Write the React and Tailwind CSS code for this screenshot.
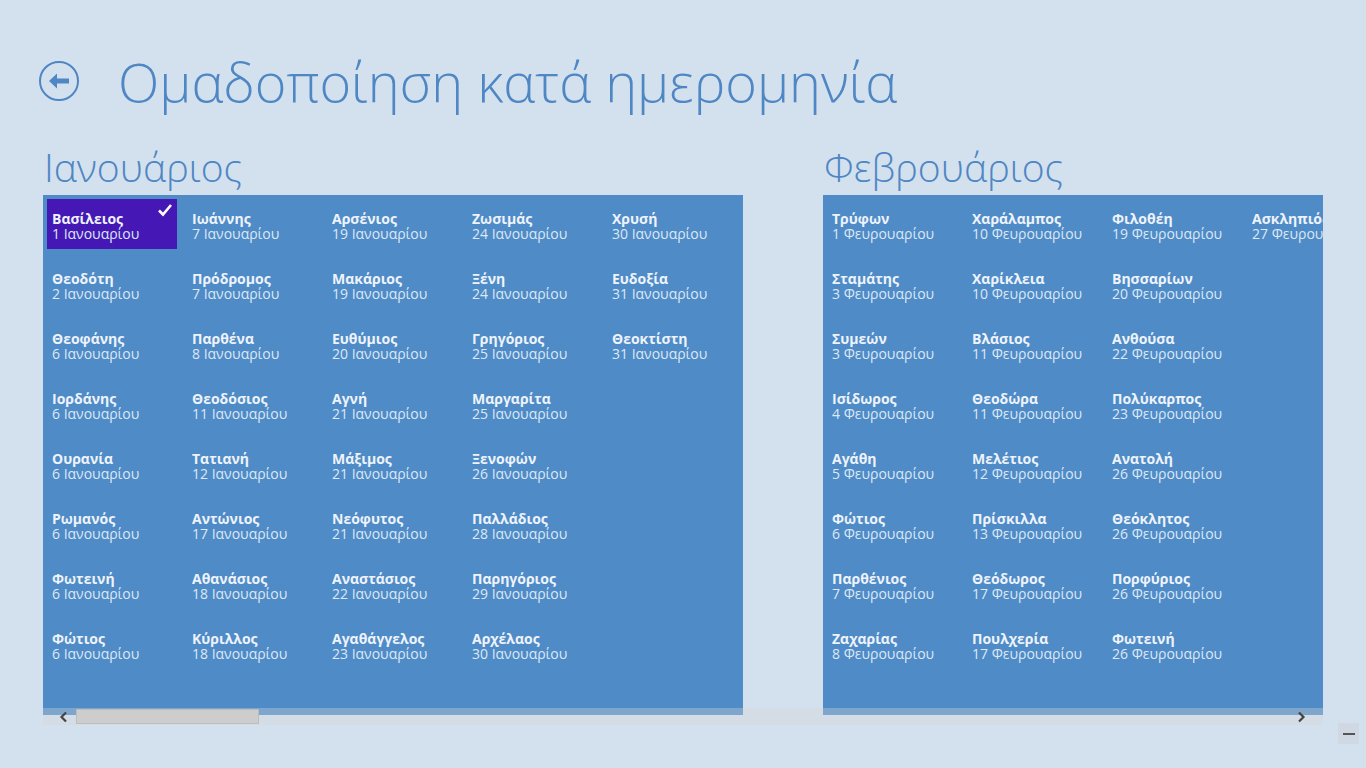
import React from 'react';

const JAN = [
  ['Βασίλειος', 1], ['Θεοδότη', 2], ['Θεοφάνης', 6], ['Ιορδάνης', 6], ['Ουρανία', 6], ['Ρωμανός', 6], ['Φωτεινή', 6], ['Φώτιος', 6],
  ['Ιωάννης', 7], ['Πρόδρομος', 7], ['Παρθένα', 8], ['Θεοδόσιος', 11], ['Τατιανή', 12], ['Αντώνιος', 17], ['Αθανάσιος', 18], ['Κύριλλος', 18],
  ['Αρσένιος', 19], ['Μακάριος', 19], ['Ευθύμιος', 20], ['Αγνή', 21], ['Μάξιμος', 21], ['Νεόφυτος', 21], ['Αναστάσιος', 22], ['Αγαθάγγελος', 23],
  ['Ζωσιμάς', 24], ['Ξένη', 24], ['Γρηγόριος', 25], ['Μαργαρίτα', 25], ['Ξενοφών', 26], ['Παλλάδιος', 28], ['Παρηγόριος', 29], ['Αρχέλαος', 30],
  ['Χρυσή', 30], ['Ευδοξία', 31], ['Θεοκτίστη', 31],
];

const FEB = [
  ['Τρύφων', 1], ['Σταμάτης', 3], ['Συμεών', 3], ['Ισίδωρος', 4], ['Αγάθη', 5], ['Φώτιος', 6], ['Παρθένιος', 7], ['Ζαχαρίας', 8],
  ['Χαράλαμπος', 10], ['Χαρίκλεια', 10], ['Βλάσιος', 11], ['Θεοδώρα', 11], ['Μελέτιος', 12], ['Πρίσκιλλα', 13], ['Θεόδωρος', 17], ['Πουλχερία', 17],
  ['Φιλοθέη', 19], ['Βησσαρίων', 20], ['Ανθούσα', 22], ['Πολύκαρπος', 23], ['Ανατολή', 26], ['Θεόκλητος', 26], ['Πορφύριος', 26], ['Φωτεινή', 26],
  ['Ασκληπιόδοτος', 27],
];

const GROUPS = [
  { title: 'Ιανουάριος', suffix: 'Ιανουαρίου', items: JAN, width: 'w-[700px]' },
  { title: 'Φεβρουάριος', suffix: 'Φευρουαρίου', items: FEB, width: 'w-[560px]' },
];

function BackButton() {
  return (
    <svg width="42" height="42" viewBox="0 0 42 42" className="shrink-0">
      <circle cx="21" cy="21" r="19" fill="none" stroke="#4f86c4" strokeWidth="2" />
      <path d="M11 21 L19 13.5 L19 18.5 L31 18.5 L31 23.5 L19 23.5 L19 28.5 Z" fill="#4f86c4" />
    </svg>
  );
}

function Tile({ name, day, suffix, selected }) {
  return (
    <div className={`relative h-[50px] w-[130px] px-[5px] pt-[12px] leading-[15px] ${selected ? 'bg-[#4518b6]' : ''}`}>
      <div className="whitespace-nowrap text-[14px] font-bold text-[#eef3fa]">{name}</div>
      <div className="whitespace-nowrap text-[14px] font-normal text-[#dde8f5]">
        {day} {suffix}
      </div>
      {selected && (
        <svg width="16" height="14" viewBox="0 0 16 14" className="absolute right-[4px] top-[4px]">
          <path d="M2 7.5 L6 11.5 L14 2" fill="none" stroke="#ffffff" strokeWidth="2.6" />
        </svg>
      )}
    </div>
  );
}

function Group({ group, first }) {
  return (
    <div className="shrink-0">
      <h2 className="h-[52px] pl-[1px] text-[39px] font-light leading-[48px] text-[#4f86c4]">{group.title}</h2>
      <div className={`${group.width} h-[520px] bg-[#4f8bc7] pl-[4px] pt-[4px]`}>
        <div className="grid grid-flow-col grid-rows-[repeat(8,50px)] auto-cols-[130px] gap-[10px]">
          {group.items.map(([name, day], i) => (
            <Tile key={name + day} name={name} day={day} suffix={group.suffix} selected={first && i === 0} />
          ))}
        </div>
      </div>
    </div>
  );
}

export default function App() {
  return (
    <div
      className="relative h-[768px] w-[1366px] overflow-hidden bg-[#d3e1ee]"
      style={{ fontFamily: '"Segoe UI", "Open Sans", "Noto Sans", sans-serif' }}
    >
      {/* page header */}
      <div className="flex items-center pl-[38px] pt-[50px]">
        <BackButton />
        <h1 className="ml-[38px] whitespace-nowrap text-[54px] font-light leading-[62px] text-[#4f86c4]">
          Ομαδοποίηση κατά ημερομηνία
        </h1>
      </div>

      {/* horizontally scrolling groups */}
      <div className="relative ml-[43px] mt-[31px] w-[1280px] overflow-hidden">
        <div className="flex gap-[80px]">
          {GROUPS.map((g, i) => (
            <Group key={g.title} group={g} first={i === 0} />
          ))}
        </div>
      </div>

      {/* scrollbar */}
      <div className="absolute left-[43px] top-[708px] flex h-[17px] w-[1280px] items-center bg-[#d8d8d8]/35">
        <svg width="12" height="12" viewBox="0 0 12 12" className="ml-[15px]">
          <path d="M8 1.5 L3.5 6 L8 10.5" fill="none" stroke="#444" strokeWidth="2.2" />
        </svg>
        <div className="ml-[6px] h-[15px] w-[183px] border border-[#bdbdbd] bg-[#cdcdcd]" />
        <div className="flex-1" />
        <svg width="12" height="12" viewBox="0 0 12 12" className="mr-[16px]">
          <path d="M4 1.5 L8.5 6 L4 10.5" fill="none" stroke="#444" strokeWidth="2.2" />
        </svg>
      </div>

      {/* zoom-out button */}
      <div className="absolute left-[1338px] top-[723px] flex h-[21px] w-[21px] items-center justify-center bg-[#cfd8e3]">
        <div className="h-[2px] w-[12px] bg-[#555]" />
      </div>
    </div>
  );
}
